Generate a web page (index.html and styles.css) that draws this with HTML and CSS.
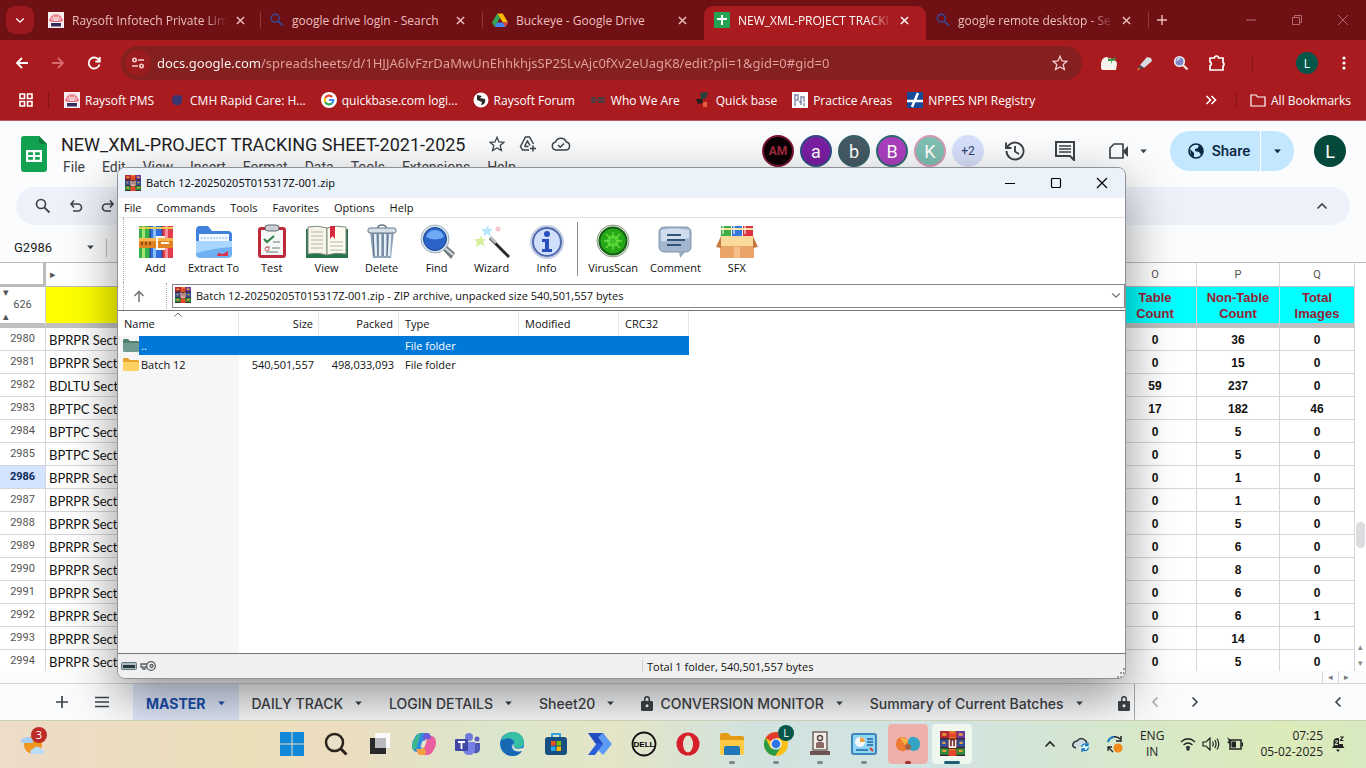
FILE: index.html
```html
<!DOCTYPE html>
<html lang="en">
<head>
  <meta charset="UTF-8" />
  <meta name="viewport" content="width=device-width, initial-scale=1.0"/>
  <title>NEW_XML-PROJECT TRACKING SHEET-2021-2025</title>
  <link rel="stylesheet" href="styles.css">
</head>
<body>
  <svg class="defs" aria-hidden="true">
    <symbol id="rar" viewBox="0 0 16 16">
      <path fill="#b52a35" d="M0 0h16v5H0z"/><path fill="#6a3c9c" d="M11 0h5v5h-5z"/><path fill="#2f4f9e" d="M0 5h16v5.500H0z"/><path fill="#2f8a3c" d="M0 10.500h16V16H0z"/>
      <path fill="#3b1c22" d="M0 4.600h16v.8H0zM0 10.200h16v.8H0zM0 15.200h16v.8H0z"/>
      <path fill="#d97f27" d="M6 0h4v16H6z"/><path fill="#e8432c" d="M6 1.500h4V4H6zM5.500 12.500h5V16h-5z"/>
      <path fill="#6d1a1c" d="M5 4.800h6v6.700H5z"/><path d="M6 5.500v4.800h4V5.500M8 6v4" fill="none" stroke="#f8f2ea" stroke-width="1"/>
      <path fill="#e9a13b" d="M1.500 1.500h2.500V3H1.500zM12 1.500h2.500V3H12zM1.500 6.800h2v1.500h-2zM12.500 6.800h2v1.500h-2zM1.500 12h2.500v1.500H1.500zM12 12h2.500v1.500H12z"/>
    </symbol>
    <symbol id="close" viewBox="0 0 10 10"><path d="M1 1l8 8M9 1L1 9" fill="none" stroke="currentColor" stroke-width="1.600"/></symbol>
    <symbol id="mag" viewBox="0 0 16 16"><circle cx="6" cy="6" r="4.500" fill="none" stroke="currentColor" stroke-width="1.700"/><path d="M9.300 9.300l5.200 5.200" stroke="currentColor" stroke-width="1.900"/></symbol>
    <symbol id="caret" viewBox="0 0 10 6"><path d="M1 .500h8L5 5z" fill="currentColor"/></symbol>
    <symbol id="chev" viewBox="0 0 12 8"><path d="M1.500 1.500L6 6l4.500-4.500" fill="none" stroke="currentColor" stroke-width="1.600"/></symbol>
    <symbol id="lock" viewBox="0 0 12 16"><path d="M1.500 6H3V4a3 3 0 0 1 6 0v2h1.500C11.300 6 12 6.500 12 7.300V14.500c0 .8-.6 1.500-1.500 1.500h-9C.6 16 0 15.300 0 14.500V7.300C0 6.500.7 6 1.500 6zm3 0h3V4a1.500 1.500 0 0 0-3 0zM6 9.300a1.500 1.500 0 1 0 0 3 1.500 1.500 0 0 0 0-3z" fill="currentColor" fill-rule="evenodd"/></symbol>
    <symbol id="star" viewBox="0 0 16 16"><path d="M8 1.300l2 4.600 5 .4-3.800 3.300 1.200 4.900L8 11.900l-4.400 2.600 1.200-4.900L1 6.300l5-.4z" fill="none" stroke="currentColor" stroke-width="1.300"/></symbol>
    <symbol id="raysoft" viewBox="0 0 16 16"><path fill="#f8eef0" d="M0 0h16v16H0z"/><path d="M1 9c1-5 4-7 7-7s6 2 7 7l-3 1H4z" fill="#e8707a"/><path d="M2 6h12M3 8h10M8 2v7M5 3l2 6M11 3L9 9" stroke="#fff" stroke-width=".7"/><path d="M3 11h10v3.500H3z" fill="#33305e"/></symbol>
    <symbol id="folder" viewBox="0 0 16 14"><path d="M0 1.500C0 .7.500 0 1.300 0H5l2 2h7.700c.8 0 1.300.6 1.300 1.300V11H0z" fill="currentColor"/><path d="M0 4h16v7.500c0 .8-.5 1.500-1.300 1.500H1.300C.5 13 0 12.300 0 11.500z"/></symbol>
  </svg>

  <div class="browser">
    <div class="tab-strip">
      <button class="tab-search" aria-label="Search tabs"><svg width="10" height="7"><use href="#chev"/></svg></button>
      <div class="tab">
        <svg width="16" height="16"><use href="#raysoft"/></svg>
        <span class="tab-title fade">Raysoft Infotech Private Lim</span>
        <button class="tab-close" aria-label="Close"><svg width="9" height="9"><use href="#close"/></svg></button>
      </div>
      <div class="tab sep">
        <svg class="blue-mag" width="14" height="14"><use href="#mag"/></svg>
        <span class="tab-title">google drive login - Search</span>
        <button class="tab-close" aria-label="Close"><svg width="9" height="9"><use href="#close"/></svg></button>
      </div>
      <div class="tab sep">
        <svg width="16" height="16" viewBox="0 0 16 16"><path d="M5.300 1.500h5.400L16 10.500h-5.200z" fill="#fbbc04"/><path d="M5.300 1.500L8 6 2.700 15 0 10.500z" fill="#34a853"/><path d="M5.300 10.500H16L13.300 15H2.700z" fill="#4285f4"/><path d="M10.700 10.500H16L13.300 15z" fill="#ea4335"/></svg>
        <span class="tab-title">Buckeye - Google Drive</span>
        <button class="tab-close" aria-label="Close"><svg width="9" height="9"><use href="#close"/></svg></button>
      </div>
      <div class="tab active">
        <svg width="16" height="16" viewBox="0 0 16 16"><rect width="16" height="16" rx="1" fill="#23a455"/><path d="M7 3h2v10H7zM3 6h10v2H3z" fill="#fff"/></svg>
        <span class="tab-title fade">NEW_XML-PROJECT TRACKI</span>
        <button class="tab-close" aria-label="Close"><svg width="9" height="9"><use href="#close"/></svg></button>
      </div>
      <div class="tab">
        <svg class="blue-mag" width="14" height="14"><use href="#mag"/></svg>
        <span class="tab-title fade">google remote desktop - Se</span>
        <button class="tab-close" aria-label="Close"><svg width="9" height="9"><use href="#close"/></svg></button>
      </div>
      <button class="new-tab sep" aria-label="New tab"><svg width="12" height="12" viewBox="0 0 12 12"><path d="M6 1v10M1 6h10" stroke="currentColor" stroke-width="1.400"/></svg></button>
      <div class="win-controls">
        <button aria-label="Minimize"><svg width="12" height="12" viewBox="0 0 12 12"><path d="M1 6h10" stroke="currentColor"/></svg></button>
        <button aria-label="Restore"><svg width="12" height="12" viewBox="0 0 12 12" fill="none" stroke="currentColor"><path d="M1.500 3.500h7v7h-7z"/><path d="M3.500 3V1.500h7v7H9"/></svg></button>
        <button aria-label="Close"><svg width="12" height="12" viewBox="0 0 12 12"><path d="M1 1l10 10M11 1L1 11" stroke="currentColor"/></svg></button>
      </div>
    </div>

    <div class="nav-bar">
      <div class="nav-buttons">
        <button aria-label="Back"><svg width="16" height="16" viewBox="0 0 16 16"><path d="M14 8H3M8 3L3 8l5 5" fill="none" stroke="currentColor" stroke-width="1.800"/></svg></button>
        <button aria-label="Forward" class="dim"><svg width="16" height="16" viewBox="0 0 16 16"><path d="M2 8h11M8 3l5 5-5 5" fill="none" stroke="currentColor" stroke-width="1.800"/></svg></button>
        <button aria-label="Reload"><svg width="16" height="16" viewBox="0 0 16 16"><path d="M13.300 6A5.500 5.500 0 1 0 13.500 9.500M13.800 2v4.500H9.300" fill="none" stroke="currentColor" stroke-width="1.800"/></svg></button>
      </div>
      <div class="omnibox">
        <button class="tune" aria-label="Site information"><svg width="14" height="14" viewBox="0 0 14 14" fill="none" stroke="currentColor" stroke-width="1.600"><circle cx="3.500" cy="4" r="1.700"/><path d="M7 4h6M1 10h6"/><circle cx="10.500" cy="10" r="1.700"/></svg></button>
        <input type="text" class="url" aria-label="Address" value="docs.google.com/spreadsheets/d/1HJJA6lvFzrDaMwUnEhhkhjsSP2SLvAjc0fXv2eUagK8/edit?pli=1&amp;gid=0#gid=0">
        <button aria-label="Bookmark this page"><svg width="16" height="16"><use href="#star"/></svg></button>
      </div>
      <div class="extensions">
        <button aria-label="Evernote"><svg width="18" height="18" viewBox="0 0 18 18"><path d="M1 9q1-5 5-6l4 1 4 2q3 1 3 4l-1 6H3q-2 0-2-2z" fill="#f5f3ee"/><path d="M8 4l4 1 4-2-2 4h-2v4l-1-4-3 0z" fill="#3c9a4b"/></svg></button>
        <button aria-label="Highlighter"><svg width="18" height="18" viewBox="0 0 18 18"><path d="M11 3l4 1 1 3-8 7-4-3z" fill="#d8dbe2"/><path d="M4 11l4 3-3 1-3-1z" fill="#474a55"/><path d="M1 16l2-2 1 1z" fill="#ffe23d"/></svg></button>
        <button aria-label="Zoom"><svg width="18" height="18" viewBox="0 0 18 18"><path d="M10.500 10.500l5 5" stroke="#f0dfd2" stroke-width="2.400"/><circle cx="7.500" cy="7.500" r="4.800" fill="#8187c6" stroke="#eee" stroke-width="1.600"/><path d="M5 7a3 3 0 0 1 3-2.500" stroke="#fff" fill="none"/></svg></button>
        <button aria-label="Extensions"><svg width="18" height="18" viewBox="0 0 18 18"><path d="M2 4h4.500a2 2 0 0 1 4 0H15v4.500a2 2 0 0 1 0 3.500v4H2v-4.300a2 2 0 0 0 0-3.800z" fill="none" stroke="currentColor" stroke-width="1.700"/></svg></button>
      </div>
      <div class="profile-area">
        <button class="profile">L</button>
        <button class="dots" aria-label="Menu"><svg width="4" height="16" viewBox="0 0 4 16" fill="currentColor"><circle cx="2" cy="3" r="1.600"/><circle cx="2" cy="8" r="1.600"/><circle cx="2" cy="13" r="1.600"/></svg></button>
      </div>
    </div>

    <nav class="bookmarks">
      <button class="apps" aria-label="Apps"><svg width="16" height="16" viewBox="0 0 16 16" fill="none" stroke="currentColor" stroke-width="1.600"><path d="M2 2h4.500v4.500H2zM9.500 2H14v4.500H9.500zM2 9.500h4.500V14H2zM9.500 9.500H14V14H9.500z"/></svg></button>
      <a href="#"><svg width="16" height="16"><use href="#raysoft"/></svg>Raysoft PMS</a>
      <a href="#"><svg width="16" height="16" viewBox="0 0 16 16"><path d="M3 7c0-4 5-5 7-3l3-1v5c0 4-3 6-6 5-3 0-4-3-4-6z" fill="#39356f"/></svg>CMH Rapid Care: H...</a>
      <a href="#"><svg width="16" height="16" viewBox="0 0 16 16"><circle cx="8" cy="8" r="8" fill="#fff"/><g fill="none" stroke-width="2.200"><path d="M11.200 4.900A4.300 4.300 0 0 0 4.200 6" stroke="#ea4335"/><path d="M4.200 6a4.300 4.300 0 0 0 0 4" stroke="#fbbc04"/><path d="M4.200 10a4.300 4.300 0 0 0 7 1" stroke="#34a853"/><path d="M11.200 11a4.300 4.300 0 0 0 1.100-3H8" stroke="#4285f4"/></g></svg>quickbase.com logi...</a>
      <a href="#"><svg width="16" height="16" viewBox="0 0 16 16"><circle cx="8" cy="8" r="7.500" fill="#fff"/><path d="M4 3l5 1-2 2 5 1c1 3-1 6-4 6l1-3-5-2z" fill="#2b2b2b"/></svg>Raysoft Forum</a>
      <a href="#"><svg width="16" height="16" viewBox="0 0 16 16"><path d="M1 5h5v6H1zM8 5h7v6H8z" fill="#513942"/><path d="M3 7h11v2H3z" fill="#6a343b"/></svg>Who We Are</a>
      <a href="#"><svg width="16" height="16" viewBox="0 0 16 16"><path d="M5 1l8-1-2 6-5 2z" fill="#24423c"/><path d="M1 7h6l1 4-5 1z" fill="#202020"/><path d="M8 10h4v5H8z" fill="#f05a3c"/></svg>Quick base</a>
      <a href="#"><svg width="16" height="16" viewBox="0 0 16 16"><path fill="#fff" d="M0 0h16v16H0z"/><path d="M3 2v12M3 3h3v5H4M9 6v7M8 5h4v5M12 11v3M7 10h3" stroke="#7f88ad" stroke-width="1.400" fill="none"/></svg>Practice Areas</a>
      <a href="#"><svg width="16" height="16" viewBox="0 0 16 16"><path fill="#164a96" d="M0 0h16v16H0z"/><path d="M0 9h16M11 1L5 15" stroke="#fff" stroke-width="2.600"/></svg>NPPES NPI Registry</a>
      <button class="more" aria-label="More bookmarks"><svg width="12" height="10" viewBox="0 0 12 10" fill="none" stroke="currentColor" stroke-width="1.600"><path d="M1.500 1l4 4-4 4M6.500 1l4 4-4 4"/></svg></button>
      <a href="#" class="all"><svg width="16" height="14" viewBox="0 0 16 14"><path d="M1 2h5l1.500 2H15v9H1z" fill="none" stroke="currentColor" stroke-width="1.200"/></svg>All Bookmarks</a>
    </nav>
  </div>

  <main class="sheets">
    <header class="doc-header">
      <svg class="sheets-logo" width="26" height="36" viewBox="0 0 26 36"><path d="M3 0h15l8 8v25a3 3 0 0 1-3 3H3a3 3 0 0 1-3-3V3a3 3 0 0 1 3-3z" fill="#12a150"/><path d="M18 0l8 8h-6a2 2 0 0 1-2-2z" fill="#0b7d3a"/><path d="M5 14h16v12H5zM7.200 16.200v2.700h4.700v-2.700zm6.900 0v2.700h4.700v-2.700zM7.200 21.100v2.700h4.700v-2.700zm6.900 0v2.700h4.700v-2.700z" fill="#fff" fill-rule="evenodd"/></svg>
      <div class="doc-info">
        <div class="doc-title-row">
          <h1>NEW_XML-PROJECT TRACKING SHEET-2021-2025</h1>
          <button aria-label="Star"><svg width="16" height="16"><use href="#star"/></svg></button>
          <button aria-label="Add to Drive"><svg width="18" height="18" viewBox="0 0 18 18" fill="none" stroke="currentColor" stroke-width="1.500"><path d="M10 15H3.500L1.500 11.500 6.500 2h4l4 7M5.500 11.500L8.500 6l2.500 4.500M5.500 11.500h4M14 10.500v6M11 13.500h6"/></svg></button>
          <button aria-label="Saved to Drive"><svg width="20" height="16" viewBox="0 0 20 16" fill="none" stroke="currentColor" stroke-width="1.500"><path d="M5 14a4 4 0 0 1-.5-7.900 5.700 5.700 0 0 1 10.800 0A4 4 0 0 1 15 14zM7 9l2.200 2.200L13 7.500"/></svg></button>
        </div>
        <nav class="doc-menu">
          <a href="#">File</a><a href="#">Edit</a><a href="#">View</a><a href="#">Insert</a><a href="#">Format</a><a href="#">Data</a><a href="#">Tools</a><a href="#">Extensions</a><a href="#">Help</a>
        </nav>
      </div>
      <div class="people">
        <span class="person am">AM</span><span class="person a">a</span><span class="person b">b</span><span class="person bb">B</span><span class="person k">K</span><span class="person plus">+2</span>
      </div>
      <div class="doc-actions">
        <button aria-label="History"><svg width="22" height="22" viewBox="0 0 22 22" fill="none" stroke="currentColor" stroke-width="1.900"><path d="M2.500 11a8.500 8.500 0 1 0 2.500-6L2.500 7.500M2 2.500v5.500h5.500M11 6v5.500l4 2.500"/></svg></button>
        <button aria-label="Comments"><svg width="20" height="20" viewBox="0 0 20 20"><path d="M1 1h18v18l-4-4H1z" fill="none" stroke="currentColor" stroke-width="2"/><path d="M4 5h12M4 8h12M4 11h12" stroke="currentColor" stroke-width="1.700"/></svg></button>
        <button aria-label="Meet" class="meet"><svg width="22" height="20" viewBox="0 0 22 20"><path d="M6 3h9v14H2V7z" fill="none" stroke="currentColor" stroke-width="1.700" stroke-linejoin="round"/><path d="M15 10l5-5v11l-5-5z" fill="currentColor"/></svg><svg width="9" height="5"><use href="#caret"/></svg></button>
      </div>
      <div class="share">
        <button class="share-main"><svg width="16" height="16" viewBox="0 0 16 16"><circle cx="8" cy="8" r="7" fill="none" stroke="currentColor" stroke-width="1.600"/><path d="M2 6l4 4v4l-3-2zM8 1l3 1-1 3-3 1v2l4 1 2 3 2-4-2-6z" fill="currentColor"/></svg>Share</button>
        <button class="share-more" aria-label="Sharing options"><svg width="9" height="5"><use href="#caret"/></svg></button>
      </div>
      <button class="account">L</button>
    </header>

    <div class="toolbar">
      <button aria-label="Search the menus"><svg width="16" height="16"><use href="#mag"/></svg></button>
      <button aria-label="Undo"><svg width="14" height="14" viewBox="0 0 14 14" fill="none" stroke="currentColor" stroke-width="1.600"><path d="M5 1.500L2 5l3 3.500M2 5h7a3.500 3.500 0 0 1 0 7H4"/></svg></button>
      <button aria-label="Redo"><svg width="14" height="14" viewBox="0 0 14 14" fill="none" stroke="currentColor" stroke-width="1.600"><path d="M9 1.500L12 5 9 8.500M12 5H5a3.500 3.500 0 0 0 0 7h5"/></svg></button>
      <button class="collapse" aria-label="Hide the menus"><svg class="flip" width="12" height="8"><use href="#chev"/></svg></button>
    </div>

    <div class="formula-bar">
      <input type="text" class="name-box" aria-label="Name box" value="G2986">
      <svg width="9" height="5"><use href="#caret"/></svg>
    </div>

    <div class="grid-area">
      <div class="grid-scroll">
        <table class="grid">
          <colgroup><col class="c-row"><col><col class="c-mid"><col class="c-mid"><col class="c-last"></colgroup>
          <thead>
            <tr class="letters"><th></th><th class="first">▸</th><th>O</th><th>P</th><th>Q</th></tr>
            <tr class="frozen"><th><span>▾</span><b>626</b><span>▴</span></th><td class="yellow"></td><td>Table<br>Count</td><td>Non-Table<br>Count</td><td>Total<br>Images</td></tr>
          </thead>
          <tbody>
            <tr><th>2980</th><td>BPRPR Section</td><td>0</td><td>36</td><td>0</td></tr>
            <tr><th>2981</th><td>BPRPR Section</td><td>0</td><td>15</td><td>0</td></tr>
            <tr><th>2982</th><td>BDLTU Section</td><td>59</td><td>237</td><td>0</td></tr>
            <tr><th>2983</th><td>BPTPC Section</td><td>17</td><td>182</td><td>46</td></tr>
            <tr><th>2984</th><td>BPTPC Section</td><td>0</td><td>5</td><td>0</td></tr>
            <tr><th>2985</th><td>BPTPC Section</td><td>0</td><td>5</td><td>0</td></tr>
            <tr class="current"><th>2986</th><td>BPRPR Section</td><td>0</td><td>1</td><td>0</td></tr>
            <tr><th>2987</th><td>BPRPR Section</td><td>0</td><td>1</td><td>0</td></tr>
            <tr><th>2988</th><td>BPRPR Section</td><td>0</td><td>5</td><td>0</td></tr>
            <tr><th>2989</th><td>BPRPR Section</td><td>0</td><td>6</td><td>0</td></tr>
            <tr><th>2990</th><td>BPRPR Section</td><td>0</td><td>8</td><td>0</td></tr>
            <tr><th>2991</th><td>BPRPR Section</td><td>0</td><td>6</td><td>0</td></tr>
            <tr><th>2992</th><td>BPRPR Section</td><td>0</td><td>6</td><td>1</td></tr>
            <tr><th>2993</th><td>BPRPR Section</td><td>0</td><td>14</td><td>0</td></tr>
            <tr><th>2994</th><td>BPRPR Section</td><td>0</td><td>5</td><td>0</td></tr>
          </tbody>
        </table>
      </div>
      <div class="v-scroll"><div class="v-track"><div class="v-thumb"></div></div><span>▴</span><span>▾</span></div>
    </div>
    <div class="h-scroll"><span>◂</span><span>▸</span></div>

    <div class="sheet-tabs">
      <button class="add" aria-label="Add sheet"><svg width="12" height="12" viewBox="0 0 12 12"><path d="M6 0v12M0 6h12" stroke="currentColor" stroke-width="1.700"/></svg></button>
      <button class="all-sheets" aria-label="All sheets"><svg width="14" height="12" viewBox="0 0 14 12"><path d="M0 1.500h14M0 6h14M0 10.500h14" stroke="currentColor" stroke-width="1.700"/></svg></button>
      <button class="sheet current"><span>MASTER</span><svg width="9" height="5"><use href="#caret"/></svg></button>
      <button class="sheet"><span>DAILY TRACK</span><svg width="9" height="5"><use href="#caret"/></svg></button>
      <button class="sheet"><span>LOGIN DETAILS</span><svg width="9" height="5"><use href="#caret"/></svg></button>
      <button class="sheet"><span>Sheet20</span><svg width="9" height="5"><use href="#caret"/></svg></button>
      <button class="sheet"><svg class="lock" width="12" height="16"><use href="#lock"/></svg><span>CONVERSION MONITOR</span><svg width="9" height="5"><use href="#caret"/></svg></button>
      <button class="sheet"><span>Summary of Current Batches</span><svg width="9" height="5"><use href="#caret"/></svg></button>
      <button class="sheet cut" aria-label="Protected sheet"><svg class="lock" width="12" height="16"><use href="#lock"/></svg></button>
      <button class="scroll-btn off" aria-label="Scroll left"><svg class="left" width="12" height="8"><use href="#chev"/></svg></button>
      <button class="scroll-btn" aria-label="Scroll right"><svg class="right" width="12" height="8"><use href="#chev"/></svg></button>
      <button class="scroll-btn last" aria-label="Show side panel"><svg class="left" width="12" height="8"><use href="#chev"/></svg></button>
    </div>

    <section class="rar-window">
      <div class="rar-title">
        <svg width="16" height="16"><use href="#rar"/></svg>
        <span>Batch 12-20250205T015317Z-001.zip</span>
        <div class="rar-controls">
          <button aria-label="Minimize"><svg width="12" height="12" viewBox="0 0 12 12"><path d="M1 6.500h10" stroke="#000"/></svg></button>
          <button aria-label="Maximize"><svg width="12" height="12" viewBox="0 0 12 12"><rect x="1.500" y="1.500" width="9" height="9" rx="1" fill="none" stroke="#000" stroke-width="1.200"/></svg></button>
          <button aria-label="Close"><svg width="12" height="12" viewBox="0 0 12 12"><path d="M1 1l10 10M11 1L1 11" stroke="#000" stroke-width="1.200"/></svg></button>
        </div>
      </div>
      <nav class="rar-menu"><a href="#">File</a><a href="#">Commands</a><a href="#">Tools</a><a href="#">Favorites</a><a href="#">Options</a><a href="#">Help</a></nav>
      <div class="rar-tools">
        <button><svg width="36" height="36" viewBox="0 0 36 36"><path d="M1 2h11v32H1z" fill="#35b14c"/><path d="M12 2h12v32H12z" fill="#2f6fe0"/><path d="M24 2h11v32H24z" fill="#e23b4e"/><path d="M4 2h3v32H4z" fill="#a4e36b"/><path d="M15 2h3v32h-3z" fill="#8bc0fb"/><path d="M27 2h3v32h-3z" fill="#f791a0"/><path d="M12 2v32M24 2v32" stroke="#34346a"/><path d="M1 4h34" stroke="#eac94f" stroke-width="2"/><path d="M1 14h34v10H1z" fill="#e08325"/><path d="M1 14h34v3H1z" fill="#f8b44e"/><path d="M4 18v3M8 18v3M12 18v3" stroke="#8f4a10" stroke-width="2"/><path d="M27 13h-8v12h8M23 19h8" fill="none" stroke="#fbf5ea" stroke-width="2"/></svg>Add</button>
        <button><svg width="38" height="36" viewBox="0 0 38 36"><path d="M1 6q0-4 4-4h8l4 5h16q4 0 4 4v20H1z" fill="#3f82dc"/><path d="M4 10h30v12H4z" fill="#f4fafe"/><path d="M6 14h26" stroke="#75b4ee" stroke-dasharray="2 1"/><path d="M1 17h36v13q0 4-4 4H5q-4 0-4-4z" fill="#6fb0f2"/><path d="M1 17h36v6q-17 1-36 6z" fill="#a8d6ff"/><path d="M23 29l5 1 5-3v5H22z" fill="#dc3448"/></svg>Extract To</button>
        <button><svg width="32" height="36" viewBox="0 0 32 36"><rect x="2" y="3" width="28" height="31" rx="3" fill="#bd2939"/><path d="M5 6h22v25H5z" fill="#f4f7f5"/><rect x="9" y="1" width="14" height="6" rx="3" fill="#c9ced2" stroke="#616a71"/><path d="M8 15l3 3 7-6" fill="none" stroke="#2c8446" stroke-width="2.200"/><path d="M17 18h7M10 23h4M16 24h8M10 28h12" stroke="#95a59d" stroke-width="1.500"/><circle cx="11" cy="25" r="2" fill="none" stroke="#e05a62"/></svg>Test</button>
        <button><svg width="42" height="36" viewBox="0 0 42 36"><path d="M0 5h42v29H0z" fill="#277349"/><path d="M2 3q10-2 19 1v27q-9-3-19-1z" fill="#f7f5e8" stroke="#7c8a7c"/><path d="M40 3q-10-2-19 1v27q9-3 19-1z" fill="#fdfbf0" stroke="#7c8a7c"/><path d="M5 8h12M5 12h12M5 16h12M5 20h12M5 24h12M24 18h13M24 22h13M24 26h13" stroke="#b2b5a8"/><path d="M24 2h5v13l-2.500-3L24 15z" fill="#d42a3b"/></svg>View</button>
        <button><svg width="32" height="36" viewBox="0 0 32 36"><path d="M4 8h24l-3 26H7z" fill="#91a5ba"/><path d="M9 10l1 22M14 10v22M19 10v22M24 10l-1 22" stroke="#e6eff6" stroke-width="2.500"/><path d="M12 10v22M17 10v22M22 10l-1 22M7 10l1 22" stroke="#536a80"/><rect x="2" y="4" width="28" height="5" rx="2" fill="#d7e0e8" stroke="#63778a"/><path d="M12 4q0-3 4-3t4 3" fill="none" stroke="#63778a" stroke-width="1.500"/></svg>Delete</button>
        <button><svg width="38" height="36" viewBox="0 0 38 36"><path d="M24 25l4-4 9 8-4 6z" fill="#727c85"/><path d="M27 24l8 7" stroke="#d7dce0" stroke-width="2"/><circle cx="17" cy="15" r="14" fill="#d9e6ef" stroke="#9dafc0"/><circle cx="17" cy="15" r="11.500" fill="#2b65ca" stroke="#1b4387"/><path d="M8 13q2-7 9-7t9 7q-9 5-18 0z" fill="#6eaaf5"/></svg>Find</button>
        <button><svg width="38" height="36" viewBox="0 0 38 36"><path d="M17 14l19 19" stroke="#27292e" stroke-width="3"/><path d="M17 13l6 6" stroke="#b5b9bd" stroke-width="3"/><path d="M15 1l1 4 4 0-3 3 1 4-4-2-3 2 0-4-3-3h5z" fill="#b5e6fb"/><path d="M8 11l1 4h4l-3 3 2 5-4-3-5 3 1-5-3-3h5z" fill="#d7ee9a"/><circle cx="25" cy="5" r="2.500" fill="#f8c6cf"/></svg>Wizard</button>
        <button><svg width="36" height="36" viewBox="0 0 36 36"><circle cx="18" cy="18" r="16" fill="#edf2fb" stroke="#c3cee4" stroke-width="2"/><circle cx="18" cy="18" r="14" fill="#cfdefb" stroke="#5168ac" stroke-width="2"/><circle cx="18" cy="10" r="3" fill="#284fbe"/><path d="M13 15h7v10h3v3H13v-3h3v-7h-3z" fill="#284fbe"/></svg>Info</button>
        <span class="tool-sep"></span>
        <button class="wide"><svg width="36" height="36" viewBox="0 0 36 36"><circle cx="18" cy="17" r="16" fill="#e5ece2" stroke="#87977f"/><circle cx="18" cy="17" r="13.500" fill="#24a818" stroke="#155f17" stroke-width="2"/><circle cx="18" cy="17" r="6" fill="#4bd22b"/><path d="M18 8v18M9 17h18M11 10l14 14M25 10L11 24" stroke="#6fdc48" stroke-width="1.300"/><circle cx="18" cy="17" r="3" fill="#3fbc2a"/></svg>VirusScan</button>
        <button class="wide"><svg width="36" height="36" viewBox="0 0 36 36"><rect x="2" y="3" width="32" height="25" rx="5" fill="#a2b7ce" stroke="#8296ae"/><path d="M4 6q14-3 28 0v8q-14 4-28 3z" fill="#cfddec"/><path d="M22 27h7l-6 7z" fill="#94aac2"/><path d="M10 11h14M10 16h18M10 21h14" stroke="#33557c" stroke-width="2"/></svg>Comment</button>
        <button class="wide"><svg width="42" height="36" viewBox="0 0 42 36"><path d="M5 2h10v12H5z" fill="#3daf45"/><path d="M16 2h10v12H16z" fill="#3576dc"/><path d="M27 2h10v12H27z" fill="#dc3140"/><path d="M5 5h32" stroke="#f3e3a0" stroke-width="2"/><path d="M7 2v8M18 2v8M29 2v8" stroke="#fff8" stroke-width="2"/><path d="M4 17h34v17H4z" fill="#eba467"/><path d="M5 12h32l3 10H2z" fill="#fbd99a"/><path d="M5 12L0 23l5 1zM37 12l5 11-5 1z" fill="#c57a3f"/><path d="M18 23h6v11h-6z" fill="#f6bf8b"/></svg>SFX</button>
      </div>
      <div class="rar-address">
        <button class="up" aria-label="Up one level"><svg width="12" height="12" viewBox="0 0 12 12"><path d="M6 12V1.500M1.500 6L6 1.500 10.500 6" fill="none" stroke="#777" stroke-width="1.600"/></svg></button>
        <div class="combo">
          <svg width="16" height="16"><use href="#rar"/></svg>
          <select aria-label="Archive path"><option>Batch 12-20250205T015317Z-001.zip - ZIP archive, unpacked size 540,501,557 bytes</option></select>
          <svg class="combo-arrow" width="10" height="7"><use href="#chev"/></svg>
        </div>
      </div>
      <div class="rar-list">
        <table>
          <colgroup><col class="f-name"><col class="f-size"><col class="f-size"><col class="f-type"><col class="f-mod"><col class="f-crc"></colgroup>
          <thead><tr><th class="sorted">Name</th><th class="num">Size</th><th class="num">Packed</th><th>Type</th><th>Modified</th><th>CRC32</th></tr></thead>
          <tbody>
            <tr class="selected"><td><svg class="up-folder" width="16" height="14"><use href="#folder"/></svg><span>..</span></td><td></td><td></td><td>File folder</td><td></td><td></td></tr>
            <tr><td><svg class="yellow-folder" width="16" height="14"><use href="#folder"/></svg><span>Batch 12</span></td><td class="num">540,501,557</td><td class="num">498,033,093</td><td>File folder</td><td></td><td></td></tr>
          </tbody>
        </table>
      </div>
      <div class="rar-status">
        <div class="status-icons">
          <svg width="16" height="10" viewBox="0 0 16 10"><rect x=".5" y="1.500" width="15" height="7" rx="1" fill="#aabec0" stroke="#60777e"/><path d="M2 4h12v3H2z" fill="#26383c"/></svg>
          <svg width="16" height="12" viewBox="0 0 16 12" fill="none" stroke="#555b60" stroke-width="1.300"><circle cx="11" cy="6" r="4.300"/><circle cx="11.500" cy="6" r="1.500"/><path d="M7 4H1v3h2v2h2V7h2"/></svg>
        </div>
        <div class="status-total">Total 1 folder, 540,501,557 bytes</div>
        <svg class="grip" width="10" height="10" viewBox="0 0 10 10" fill="#999"><path d="M8 0h2v2H8zM5 4h2v2H5zM8 4h2v2H8zM2 8h2v2H2zM5 8h2v2H5zM8 8h2v2H8z"/></svg>
      </div>
    </section>
  </main>

  <footer class="taskbar">
    <button class="widgets" aria-label="Widgets">
      <svg width="28" height="28" viewBox="0 0 28 28"><circle cx="14" cy="15" r="9" fill="#f0961e"/><path d="M2 12a4 4 0 0 1 4-4 5 5 0 0 1 8 2v3H4z" fill="#a9cdf5"/><path d="M12 24a3 3 0 0 1 2-5 5 5 0 0 1 9 1 2 2 0 0 1 1 4z" fill="#b9dcf8"/></svg>
      <span class="badge">3</span>
    </button>
    <div class="task-icons">
      <button aria-label="Start"><svg width="24" height="24" viewBox="0 0 24 24"><path d="M0 0h11.500v11.500H0zM12.500 0H24v11.500H12.500zM0 12.500h11.500V24H0zM12.500 12.500H24V24H12.500z" fill="#1288d8"/></svg></button>
      <button aria-label="Search"><svg width="24" height="24" viewBox="0 0 24 24"><circle cx="10.500" cy="10.500" r="8.500" fill="#e9e2c8" stroke="#2b241c" stroke-width="2.500"/><path d="M16.500 16.500l6 6" stroke="#2b241c" stroke-width="3"/></svg></button>
      <button aria-label="Task view"><svg width="24" height="24" viewBox="0 0 24 24"><path d="M7 1h15v15H7z" fill="#fafafa"/><path d="M2 6h16v16H2z" fill="#29282b"/><path d="M7 6h11v10H7z" fill="#b9b9be"/></svg></button>
      <button aria-label="Copilot"><svg width="24" height="24" viewBox="0 0 24 24"><path d="M9 1h6q3 0 4 4l1 2h-5q-3 0-4 4l-2 6q-1 3-4 3Q0 20 0 13q0-4 3-8 2-4 6-4z" fill="#2f8bdd"/><path d="M4 5q2-4 5-4-1 2-2 6L4 17l-3 1q-2-7 3-13z" fill="#3fb88b"/><path d="M15 23H9q-3 0-4-4l-1-2h5q3 0 4-4l2-6q1-3 4-3 5 0 5 7 0 4-3 8-2 4-6 4z" fill="#e95fa2"/><path d="M9 23q-3 0-4-4l-1-2h5q2 0 3-2l2 5-1 3z" fill="#f3a13c"/><path d="M15 1q3 0 4 4l-1 2h-3q-2 0-3 2l-1-4q1-4 4-4z" fill="#7058d6"/><path d="M10.500 9h4l-2 6h-4z" fill="#e5e6cf"/></svg></button>
      <button aria-label="Teams"><svg width="26" height="24" viewBox="0 0 26 24"><circle cx="14" cy="5" r="4" fill="#6f78dc"/><circle cx="22" cy="7" r="2.500" fill="#585fc2"/><path d="M18 11h7v6c0 3-3 5-6 4z" fill="#5159bb"/><path d="M8 10h12v7c0 8-12 8-12 0z" fill="#7780e4"/><rect y="7" width="13" height="12" rx="1" fill="#4148a7"/><path d="M3 10h7M6.500 10v7" stroke="#fff" stroke-width="1.800"/></svg></button>
      <button aria-label="Edge"><svg width="24" height="24" viewBox="0 0 24 24"><circle cx="12" cy="12" r="12" fill="#1b77ce"/><path d="M1 9C3 3 8 0 13 0c7 0 11 5 11 10 0 4-3 6-7 6-3 0-4-1-3-3 2-4-3-8-8-6-2 0-4 1-5 2z" fill="#38bfa4"/><path d="M1 9c5-5 13-2 13 2-3 0-5 4-2 7 3 3 7 2 10 1-3 5-9 6-14 4-5-2-7-8-7-14z" fill="#1867b3"/><path d="M14 11c-2 5 2 7 9 5l1 2-2 1c-7 2-13-3-8-8z" fill="#e5e9cf"/></svg></button>
      <button aria-label="Store"><svg width="24" height="24" viewBox="0 0 24 24"><path d="M8 6V2h8v4" fill="none" stroke="#35a1d9" stroke-width="2"/><rect x="1" y="5" width="22" height="18" rx="3" fill="#174f80"/><path d="M7 9h4.500v4.500H7z" fill="#f25022"/><path d="M12.500 9H17v4.500h-4.500z" fill="#7fba00"/><path d="M7 14.500h4.500V19H7z" fill="#29a8ee"/><path d="M12.500 14.500H17V19h-4.500z" fill="#ffb900"/></svg></button>
      <button aria-label="Power Automate"><svg width="26" height="22" viewBox="0 0 26 22"><path d="M1 0h15l6 9-9 5-5-4z" fill="#234bc0"/><path d="M16 0l9 11-9 11-5-5 5-6-5-7z" fill="#5e9bf5"/><path d="M1 22l9-12 6 1-8 11z" fill="#2a61db"/></svg></button>
      <button aria-label="Dell"><svg width="26" height="26" viewBox="0 0 26 26"><circle cx="13" cy="13" r="11.500" fill="none" stroke="#111" stroke-width="1.800"/><text x="13" y="16" text-anchor="middle" class="dell">DELL</text></svg></button>
      <button aria-label="Opera"><svg width="24" height="24" viewBox="0 0 24 24"><circle cx="12" cy="12" r="11.500" fill="#d61e2d"/><ellipse cx="12" cy="12" rx="5" ry="8.500" fill="#dfe4cf"/></svg></button>
      <button aria-label="File Explorer" class="open"><svg width="26" height="24" viewBox="0 0 26 24"><path d="M1 3q0-2 2-2h6l3 3h11q2 0 2 2v4H1z" fill="#e39a15"/><path d="M1 8h24v13q0 2-2 2H3q-2 0-2-2z" fill="#fccb43"/><path d="M5 16q0-2 2-2h12q2 0 2 2v7H5z" fill="#2277b8"/></svg></button>
      <button aria-label="Chrome" class="open"><svg width="26" height="26" viewBox="0 0 26 26"><circle cx="13" cy="13" r="12" fill="#fbc017"/><path d="M13 13L2.600 7A12 12 0 0 1 23.400 7H13z" fill="#e33b2e"/><path d="M13 13l-5 5-5.400-11A12 12 0 0 0 12 25l6-9z" fill="#2a9b46"/><circle cx="13" cy="13" r="5.600" fill="#fff"/><circle cx="13" cy="13" r="4.400" fill="#2f74e0"/></svg><span class="badge green">L</span></button>
      <button aria-label="Assistant" class="open"><svg width="24" height="26" viewBox="0 0 24 26"><path d="M5 1h14v18H5z" fill="#f1eee8" stroke="#736461" stroke-width="1.500"/><circle cx="12" cy="7" r="2.500" fill="none" stroke="#5b4844" stroke-width="1.500"/><path d="M8 17v-5q4-3 8 0v5z" fill="#8a6a64"/><path d="M2 20h20v4H2z" fill="#6d5250"/></svg></button>
      <button aria-label="Control Panel" class="open"><svg width="26" height="22" viewBox="0 0 26 22"><rect x="1" y="1" width="24" height="20" rx="2" fill="#8fd6f5" stroke="#3a86bd" stroke-width="2"/><circle cx="9" cy="9" r="5" fill="#f6f9fb"/><path d="M9 9V4a5 5 0 0 1 5 5z" fill="#f2a23c"/><path d="M16 6h6M16 9h6M16 12h6M5 17h12" stroke="#20649e" stroke-width="1.500"/><path d="M19 15l3 3" stroke="#d83c3c" stroke-width="2"/></svg></button>
      <button aria-label="Copilot app" class="open alert"><svg width="24" height="20" viewBox="0 0 24 20"><path d="M0 10q0-6 6-7 5 0 6 4v6q-2 5-6 4-6-1-6-7z" fill="#ef7a32"/><path d="M12 7q2-5 6-4 6 1 6 7 0 6-6 7-4 0-6-4z" fill="#32a4c4"/><path d="M4 4q5-2 8 3l-3 4z" fill="#f6b446"/><circle cx="12" cy="13" r="3" fill="#a2623f"/></svg></button>
      <button aria-label="WinRAR" class="open focus"><svg width="25" height="25"><use href="#rar"/></svg></button>
    </div>
    <div class="tray">
      <button aria-label="Hidden icons"><svg class="flip" width="12" height="8"><use href="#chev"/></svg></button>
      <button aria-label="OneDrive"><svg width="18" height="16" viewBox="0 0 18 16"><path d="M4 12Q0 11 1 8q1-3 4-3 4-5 9 0l1 3" fill="#cadae0" stroke="#2d3336" stroke-width="1.500"/><circle cx="13" cy="11" r="4" fill="#dff" /><path d="M9.500 11a3.500 3.500 0 0 1 6-2M16.500 11.500a3.500 3.500 0 0 1-6 2M16 6.500v3h-3M10 16v-3h3" fill="none" stroke="#1674ba" stroke-width="1.300"/></svg></button>
      <button aria-label="Updates"><svg width="18" height="18" viewBox="0 0 18 18"><path d="M2 7a7 7 0 0 1 12-3M15 1v5h-5" fill="none" stroke="#222" stroke-width="1.500"/><path d="M2 7a7 7 0 0 1 6-5" fill="none" stroke="#1884ca" stroke-width="2"/><path d="M2 16v-4h4M2 12l5 5" fill="none" stroke="#222" stroke-width="1.300"/><circle cx="12" cy="13" r="4.500" fill="#f08a19"/></svg></button>
      <button class="lang">ENG<br>IN</button>
      <button class="status" aria-label="Network, volume, battery">
        <svg width="16" height="14" viewBox="0 0 16 14" fill="none" stroke="#222" stroke-width="1.300"><path d="M1 5q7-6.500 14 0M3.500 8q4.500-4 9 0M6 10.500q2-1.500 4 0"/><circle cx="8" cy="12" r="1" fill="#222"/></svg>
        <svg width="18" height="14" viewBox="0 0 18 14" fill="none" stroke="#222" stroke-width="1.200"><path d="M1 5h3l4-4v12L4 9H1zM10.500 4.500q1.500 2.500 0 5M12.800 3q2.500 4 0 8M15 1.500q3.500 5.500 0 11"/></svg>
        <svg width="18" height="14" viewBox="0 0 18 14"><path d="M4 3h11v9H4z" fill="none" stroke="#222" stroke-width="1.500"/><path d="M15.500 5.500H17v4h-1.500zM5.500 4.500H10v6H5.500z" fill="#222"/><path d="M1 0l5 4-2 1 2 4-5-4 2-1z" fill="#222"/></svg>
      </button>
      <button class="clock">07:25<br>05-02-2025</button>
      <button aria-label="Notifications"><svg width="14" height="16" viewBox="0 0 14 16"><path d="M1 12l1.500-2V5Q3 2 7 2l1 0v6h4v2l1.500 2zM5 13.500h4L7 16z" fill="#222"/><path d="M9 1h3L9.500 4.500h3" stroke="#222" fill="none" stroke-width="1.200"/><path d="M4 5h3L4 8.500h3" stroke="#dce8bd" fill="none"/></svg></button>
    </div>
  </footer>
</body>
</html>
```
FILE: styles.css
```css
:root {
  --ui: "Open Sans", "Noto Sans", sans-serif;
  --docs: Roboto, "Liberation Sans", sans-serif;
  --strip: #6e1014;
  --red: #a91b1f;
  --pale: #f6cfcf;
  --ink: #3f4245;
  --line: #d6d6d6;
}

* {
  box-sizing: border-box;
}

body {
  margin: 0;
  height: 100vh;
  display: flex;
  flex-direction: column;
  overflow: hidden;
  font-family: var(--ui);
  font-size: 12px;
}

button, input, select {
  border: 0;
  margin: 0;
  padding: 0;
  background: none;
  color: inherit;
  font: inherit;
}

button {
  display: flex;
  align-items: center;
  justify-content: center;
}

a {
  color: inherit;
  text-decoration: none;
}

svg {
  flex: none;
}

.defs {
  position: absolute;
  width: 0;
  height: 0;
}

/* browser */

.browser {
  flex: none;
  background: var(--red);
  color: #fff;
  border-bottom: 1px solid #b45a60;
}

.tab-strip {
  display: flex;
  height: 40px;
  padding-left: 6px;
  background: var(--strip);
  color: #eebfbf;
}

.tab-search {
  width: 28px;
  height: 28px;
  margin: 6px 4px 0 0;
  border-radius: 9px;
  background: #9b181c;
  color: #fff;
}

.tab {
  flex: 0 1 222px;
  min-width: 0;
  display: flex;
  align-items: center;
  gap: 8px;
  padding: 0 17px 0 10px;
}

.tab.active {
  margin-top: 6px;
  padding-bottom: 6px;
  border-radius: 9px 9px 0 0;
  background: var(--red);
  color: #fff;
}

.sep {
  background: linear-gradient(#98363b, #98363b) 0 50% / 1px 16px no-repeat;
}

.tab-title {
  flex: 1;
  white-space: nowrap;
}

.fade {
  mask-image: linear-gradient(90deg, #000 85%, transparent);
}

.blue-mag {
  color: #34499b;
}

.new-tab {
  width: 28px;
}

.win-controls {
  display: flex;
  margin-left: auto;
  color: #b46a6d;
}

.win-controls button {
  width: 46px;
}

.nav-bar {
  display: flex;
  align-items: center;
  height: 46px;
  padding: 0 20px 0 4px;
}

.nav-buttons {
  display: flex;
  width: 117px;
}

.nav-buttons button {
  width: 36px;
}

.dim {
  color: #d8696c;
}

.omnibox {
  flex: 1;
  display: flex;
  align-items: center;
  height: 34px;
  padding: 0 14px 0 4px;
  border-radius: 17px;
  background: #84201f;
  color: var(--pale);
}

.tune {
  width: 26px;
  height: 26px;
  margin-right: 6px;
  border-radius: 13px;
  background: #9b1c1e;
}

.url {
  flex: 1;
  min-width: 0;
  font-family: "Noto Sans", sans-serif;
  font-size: 13px;
  color: transparent;
  background: linear-gradient(90deg, #fff 104px, #e2a4a2 104px);
  background-clip: text;
}

.extensions {
  display: flex;
  padding: 0 9px;
  color: #fff;
}

.extensions button {
  width: 36px;
}

.profile-area {
  display: flex;
  align-items: center;
  gap: 24px;
  padding-left: 52px;
  background: linear-gradient(#7f1518, #7f1518) 8px 50% / 1px 16px no-repeat;
}

.profile {
  width: 22px;
  height: 22px;
  border-radius: 50%;
  background: #06564a;
}

.bookmarks {
  display: flex;
  align-items: center;
  gap: 15px;
  height: 34px;
  padding: 0 15px 6px 18px;
  font-size: 12px;
}

.bookmarks a {
  display: flex;
  align-items: center;
  gap: 5px;
  white-space: nowrap;
}

.apps {
  width: 31px;
  justify-content: flex-start;
  background: linear-gradient(#7f1518, #7f1518) 100% 50% / 1px 16px no-repeat;
}

.more {
  margin-left: auto;
}

.all {
  margin-left: 4px;
  padding-left: 14px;
  background: linear-gradient(#7f1518, #7f1518) 0 50% / 1px 16px no-repeat;
}

/* spreadsheet */

.sheets {
  position: relative;
  flex: 1;
  min-height: 0;
  display: flex;
  flex-direction: column;
  overflow: hidden;
  background: #fbfcfe;
  color: var(--ink);
  font-family: var(--docs);
}

.doc-header {
  display: flex;
  height: 66px;
  padding: 9px 20px 0;
}

.sheets-logo {
  margin: 6px 14px 0 1px;
}

.doc-info h1 {
  margin: 0 10px 0 0;
  color: #1f1f1f;
  font-size: 18px;
  font-weight: 400;
}

.doc-title-row {
  display: flex;
  align-items: center;
  gap: 14px;
  height: 28px;
}

.doc-menu {
  display: flex;
  gap: 17px;
  padding-left: 2px;
  font-size: 14px;
  line-height: 18px;
}

.people {
  display: flex;
  gap: 6px;
  margin-left: auto;
  padding-top: 5px;
}

.person {
  display: flex;
  align-items: center;
  justify-content: center;
  width: 32px;
  height: 32px;
  border: 2px solid #2a6f63;
  border-radius: 50%;
  color: #fff;
  font-size: 18px;
}

.am { background: #0c0205; border-color: #7d1532; color: #a32a3d; font-size: 12px; font-weight: 700; }
.a { background: #7a1fa2; border-color: #2f4e86; }
.b { background: #455a64; border-color: #38616a; }
.bb { background: #ab3fbd; border-color: #2d6a70; }
.k { background: #7fbfb3; border-color: #d79ab6; }
.plus { background: #d7e0fb; border-color: #d7e0fb; color: #2e4470; font-size: 12px; }

.doc-actions {
  display: flex;
  align-items: center;
  height: 42px;
  gap: 29px;
  padding: 0 22px 0 20px;
}

.meet {
  gap: 9px;
  margin-left: 4px;
}

.share {
  display: flex;
  width: 124px;
  height: 40px;
  margin: 1px 20px 0 0;
  border-radius: 20px;
  background: #c2e7ff;
  color: #0a2540;
}

.share-main {
  flex: 1;
  gap: 8px;
  padding-left: 8px;
  border-right: 1px solid #fff;
  font-size: 15px;
  font-weight: 500;
}

.share-more {
  width: 33px;
}

.account {
  width: 32px;
  height: 32px;
  margin-top: 5px;
  border-radius: 50%;
  background: #04493c;
  color: #fff;
  font-size: 18px;
}

.toolbar {
  display: flex;
  align-items: center;
  gap: 18px;
  flex: none;
  height: 38px;
  margin: 0 16px;
  padding: 0 22px 0 19px;
  border-radius: 19px;
  background: #edf2fa;
}

.collapse {
  margin-left: auto;
}

.flip {
  transform: rotate(180deg);
}

.formula-bar {
  display: flex;
  align-items: center;
  flex: none;
  height: 37px;
  padding: 8px 0 0 14px;
}

.name-box {
  width: 72px;
  font-size: 13px;
  color: #222;
}

.formula-bar::after {
  content: "";
  height: 18px;
  margin-left: 11px;
  border-left: 1px solid #bbb;
}

.grid-area {
  flex: 1;
  min-height: 0;
  display: flex;
  overflow: hidden;
  border-top: 1px solid #bdbdbd;
  background: #fff;
}

.grid-scroll {
  flex: 1;
  overflow: hidden;
}

.grid {
  width: 100%;
  table-layout: fixed;
  border-spacing: 0;
}

.c-row { width: 46px; }
.c-mid { width: 83px; }
.c-last { width: 75px; }

.grid th, .grid td {
  height: 23px;
  padding: 0;
  border-right: 1px solid var(--line);
  border-bottom: 1px solid var(--line);
  overflow: hidden;
  white-space: nowrap;
  text-align: center;
  line-height: 16px;
}

.grid th {
  color: #555;
  font-size: 11px;
  font-weight: 400;
}

.grid td {
  padding-top: 2px;
  color: #111;
  font: bold 12px/16px "Liberation Sans", sans-serif;
}

.grid tbody td:nth-child(2) {
  padding-left: 3px;
  font: 13px/16px Lato, sans-serif;
  text-align: left;
}

.grid .letters th {
  height: 24px;
  border-bottom-color: #bbb;
}

.grid .letters th:first-child {
  border-right: 3px solid #bbb;
  border-bottom: 3px solid #bbb;
}

.grid .letters .first {
  padding-left: 4px;
  text-align: left;
}

.grid .frozen th, .grid .frozen td {
  height: 41px;
  border-bottom: 5px solid #c0c0c0;
}

.grid .frozen td {
  background: #00ffff;
  color: #9b1d34;
  font-size: 13px;
}

.grid .frozen .yellow {
  background: #ffff00;
}

.frozen b {
  display: block;
  line-height: 12px;
  font-weight: 400;
}

.frozen span {
  display: block;
  padding-left: 3px;
  text-align: left;
  line-height: 12px;
}

.grid .current th {
  background: #d3e3fd;
  color: #0b2a5c;
  font-weight: 700;
}

.v-scroll {
  display: flex;
  flex-direction: column;
  width: 11px;
  color: #888;
  font-size: 9px;
  line-height: 16px;
  text-align: center;
}

.v-track {
  flex: 1;
  display: flex;
  flex-direction: column;
  justify-content: flex-end;
  padding: 0 1px 91px;
}

.v-thumb {
  height: 26px;
  border-radius: 5px;
  background: #dadce0;
}

.h-scroll {
  display: flex;
  justify-content: flex-end;
  flex: none;
  height: 13px;
  padding-right: 12px;
  border-bottom: 1px solid var(--line);
  color: #777;
  font-size: 9px;
  line-height: 12px;
}

.h-scroll span {
  width: 16px;
  border-left: 1px solid var(--line);
  text-align: center;
}

.sheet-tabs {
  display: flex;
  flex: none;
  height: 36px;
  background: #f9fbfd;
}

.add {
  width: 36px;
  margin-left: 44px;
}

.all-sheets {
  width: 44px;
  margin-right: 9px;
}

.sheet {
  gap: 11px;
  padding: 2px 13px 0;
  font-family: Inter, sans-serif;
  font-size: 14px;
  font-weight: 500;
  white-space: nowrap;
}

.sheet .lock {
  margin-right: -4px;
}

.sheet.current {
  background: #dfe8fa;
  color: #1a4fae;
  font-weight: 700;
}

.sheet.cut {
  margin-left: 8px;
  padding-right: 8px;
  border-right: 1px solid #aaa;
}

.scroll-btn {
  width: 40px;
}

.scroll-btn.off {
  color: #aaa;
}

.scroll-btn.last {
  margin-left: auto;
  margin-right: 8px;
}

.left {
  transform: rotate(90deg);
}

.right {
  transform: rotate(-90deg);
}

/* archive window, floats over the spreadsheet */

.rar-window {
  position: absolute;
  z-index: 2;
  top: 46px;
  right: 240px;
  bottom: 41px;
  left: 117px;
  display: flex;
  flex-direction: column;
  overflow: hidden;
  border: 1px solid #8f9296;
  border-radius: 8px;
  background: #fff;
  box-shadow: 0 18px 50px rgba(0, 0, 0, 0.42);
  color: #111;
  font-family: var(--ui);
  font-size: 11px;
}

.rar-title {
  display: flex;
  align-items: center;
  gap: 5px;
  flex: none;
  height: 30px;
  padding: 0 0 1px 7px;
  background: #ecf2f9;
  font-family: "Noto Sans", sans-serif;
}

.rar-controls {
  display: flex;
  margin-left: auto;
}

.rar-controls button {
  width: 46px;
}

.rar-menu {
  display: flex;
  align-items: center;
  gap: 15px;
  flex: none;
  height: 20px;
  padding-left: 6px;
  border-bottom: 1px solid #e3e3e3;
}

.rar-tools {
  display: flex;
  flex: none;
  height: 64px;
  margin-left: 5px;
  padding: 6px 0 0 4px;
  border-left: 1px dotted #aaa;
}

.rar-tools button {
  flex-direction: column;
  justify-content: flex-start;
  min-width: 55px;
  padding: 0 5px;
  line-height: 16px;
}

.rar-tools .wide {
  min-width: 60px;
  padding: 0 6px;
}

.tool-sep {
  height: 54px;
  margin: -2px 4px 0 3px;
  border-left: 1px solid #8a8a8a;
}

.rar-address {
  display: flex;
  align-items: center;
  flex: none;
  height: 28px;
  margin-left: 5px;
  border-left: 1px dotted #aaa;
}

.up {
  width: 43px;
  height: 26px;
  padding-right: 12px;
  margin-right: 5px;
  border-right: 1px dotted #aaa;
}

.combo {
  flex: 1;
  display: flex;
  align-items: center;
  gap: 5px;
  height: 24px;
  padding: 0 3px 2px 2px;
  border: 1px solid #8a8a8a;
}

.combo select {
  flex: 1;
  min-width: 0;
  appearance: none;
}

.combo-arrow {
  color: #777;
}

.rar-list {
  flex: 1;
  border-top: 1px solid #777;
  border-bottom: 1px solid #777;
  background: linear-gradient(#f6f6f7, #f6f6f7) 0 25px / 121px 100% no-repeat;
}

.rar-list table {
  width: 571px;
  table-layout: fixed;
  border-spacing: 0;
}

.f-name { width: 121px; }
.f-size { width: 80px; }
.f-type { width: 120px; }
.f-mod { width: 100px; }
.f-crc { width: 70px; }

.rar-list th {
  height: 25px;
  padding: 0 6px;
  border-right: 1px solid #e5e5e5;
  font-weight: 400;
  text-align: left;
}

.rar-list th.sorted {
  background: url("data:image/svg+xml,%3Csvg xmlns='http://www.w3.org/2000/svg' width='8' height='5'%3E%3Cpath d='M.5 4.500L4 1l3.500 3.500' fill='none' stroke='%23666'/%3E%3C/svg%3E") 50% 1px no-repeat;
}

.rar-list .num {
  padding-right: 5px;
  text-align: right;
}

.rar-list td {
  height: 19px;
  padding: 0 6px;
  line-height: 19px;
  white-space: nowrap;
}

.rar-list td:first-child {
  display: flex;
  align-items: center;
  padding: 0 0 0 5px;
}

.rar-list td:first-child span {
  flex: 1;
  height: 19px;
  padding-left: 2px;
}

.selected td:not(:first-child), .selected td:first-child span {
  background: #0078d7;
  color: #fff;
}

.up-folder { color: #50806f; fill: #6f9a90; }
.yellow-folder { color: #e8a52c; fill: #ffd163; }

.rar-status {
  display: flex;
  align-items: center;
  flex: none;
  height: 24px;
  background: #f0f0f0;
}

.status-icons {
  flex: 0 0 525px;
  display: flex;
  align-items: center;
  gap: 3px;
  padding-left: 3px;
  border-right: 1px solid #d0d0d0;
}

.status-total {
  flex: 1;
  padding-left: 4px;
}

.grip {
  align-self: flex-end;
}

/* taskbar */

.taskbar {
  flex: none;
  display: flex;
  height: 48px;
  padding: 0 21px 2px 0;
  border-top: 1px solid #cbcfb4;
  background: linear-gradient(90deg, #eddcc9 0%, #ebdfba 18%, #ecddc0 25%, #dbe6cc 36%, #e4e5c6 45%, #d1e2de 55%, #d1e3e2 68%, #d5e7cf 80%, #dcebb9 94%, #d7e9c1 100%);
  color: #222;
}

.widgets {
  position: relative;
  width: 270px;
  padding-left: 19px;
  justify-content: flex-start;
}

.badge {
  position: absolute;
  top: 6px;
  left: 31px;
  width: 16px;
  height: 16px;
  border-radius: 50%;
  background: #bd2a27;
  color: #fff;
  font-size: 11px;
  line-height: 16px;
  text-align: center;
}

.badge.green {
  top: 1px;
  left: 24px;
  background: #06564a;
}

.task-icons {
  display: flex;
  align-items: center;
}

.task-icons button {
  position: relative;
  width: 44px;
  height: 40px;
  border-radius: 5px;
}

.task-icons .open::after {
  content: "";
  position: absolute;
  bottom: 0;
  left: 19px;
  width: 6px;
  height: 3px;
  border-radius: 2px;
  background: #7c8a8a;
}

.task-icons .alert {
  background: #eeb0aa;
  background-clip: padding-box;
  border: solid transparent;
  border-width: 0 2px;
}

.task-icons .alert::after {
  left: 17px;
  background: #a3302d;
}

.task-icons .focus {
  background: #f0f7ef;
  background-clip: padding-box;
  border: solid transparent;
  border-width: 0 2px;
}

.task-icons .focus::after {
  left: 12px;
  width: 16px;
  background: #1c6173;
}

.dell {
  font: bold 8px "Liberation Sans", sans-serif;
}

.tray {
  display: flex;
  align-items: center;
  gap: 16px;
  margin-left: auto;
}

.tray .lang, .tray .clock {
  line-height: 16px;
  font-size: 12px;
}

.tray .clock {
  text-align: right;
}

.tray .status {
  gap: 6px;
}

.tray > button:last-child {
  margin-left: -8px;
}
```
